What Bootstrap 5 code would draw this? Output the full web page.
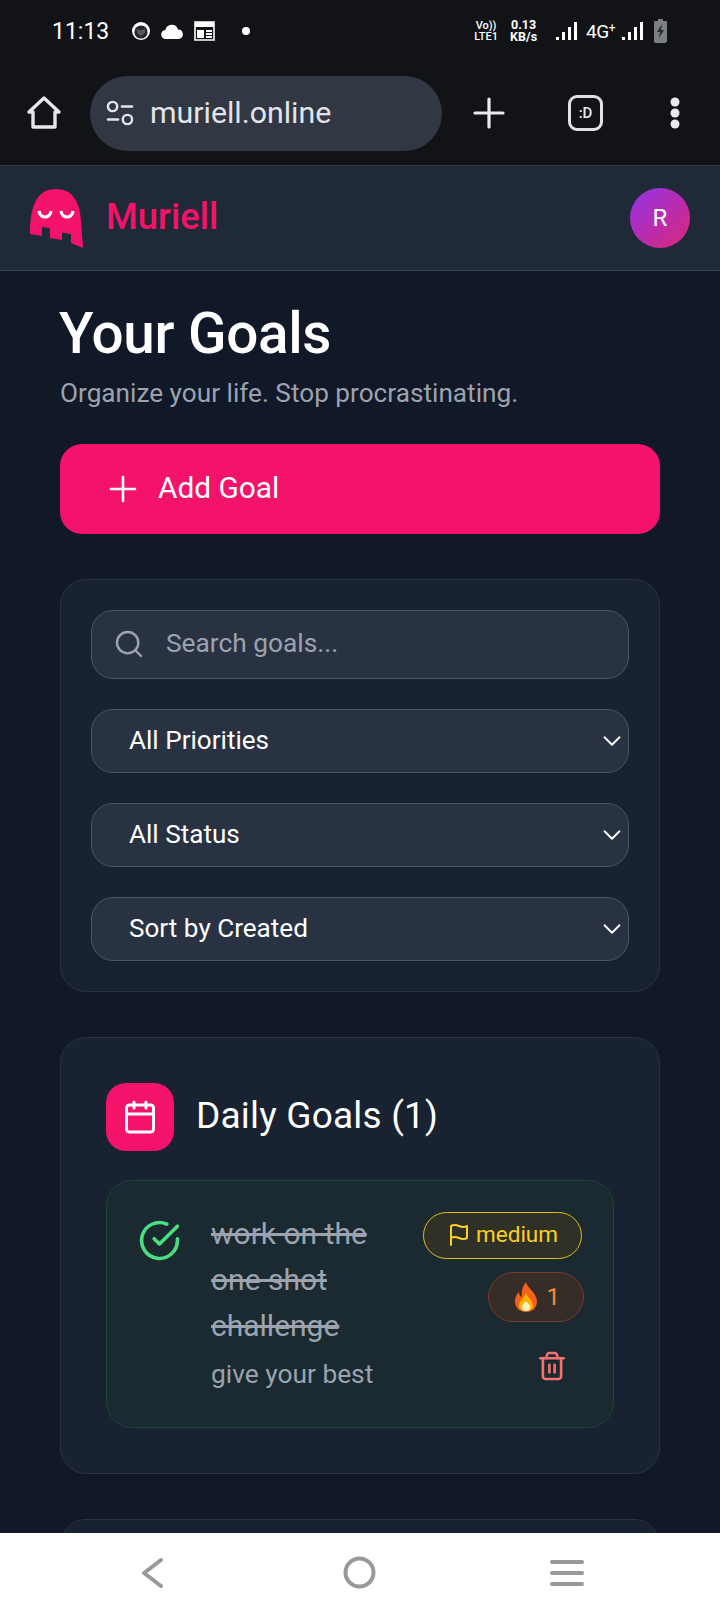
<!DOCTYPE html>
<html lang="en">
<head>
<meta charset="utf-8">
<title>Muriell</title>
<link href="https://cdn.jsdelivr.net/npm/bootstrap@5.3.0/dist/css/bootstrap.min.css" rel="stylesheet">
<style>
html,body{height:1612px;overflow:hidden}
body{font-family:Roboto,"Liberation Sans",sans-serif;background:#111827;color:#fff;display:flex;flex-direction:column}
.chrome-top{background:#111317;height:166px;flex:none;border-bottom:1px solid #33373d}
.status-row{height:56px;padding:6px 53px 0 52px;font-size:22px;line-height:1}
.status-clock{width:63px;font-size:23px}
.gap-face{margin-left:16px}
.gap-cloud,.gap-cal{margin-left:10px}
.status-dot{width:8px;height:8px;border-radius:50%;background:#fff;margin-left:27px}
.status-mini{font-size:11px;line-height:11px;font-weight:500;text-align:center;width:24px}
.status-speed{font-size:12.500px;line-height:12.500px;font-weight:700;text-align:center;width:29px;margin-left:11px}
.gap-bars{margin-left:18px}
.status-4g{font-size:19px;letter-spacing:-.5px;margin:0 7px 0 8px}
.status-4g sup{font-size:12px;top:-.5em}
.tool-row{height:109px;padding:5px 40px 0 26px}
.url-pill{width:352px;height:75px;background:#323744;border-radius:38px;padding-left:16px;gap:16px;font-size:30.300px;color:#e3e5e9;margin-left:28px}
.tool-tail{flex:1;padding-left:31px}
.tab-count{width:35px;height:36px;border:3px solid #dfe1e5;border-radius:9px;font-size:15px;font-weight:500;color:#e8eaed;margin-right:4px}
.app-nav{background:#1f2937;height:105px;flex:none;border-bottom:1px solid #374151;padding:0 30px 0 30px}
.brand-word{color:#f3136b;font-size:36.400px;font-weight:500;margin-left:22px;line-height:1;margin-top:-2px}
.user-disc{width:60px;height:60px;border-radius:50%;background:linear-gradient(135deg,#9333ea,#db2777);font-size:24px}
.page-body{flex:1;min-height:0;overflow:hidden;padding:0 60px;background:#111827}
.page-h{font-size:56.600px;font-weight:500;line-height:1;margin:35px 0 0 -1px;letter-spacing:-.3px}
.page-sub{font-size:26.200px;color:#9ca3af;margin:14px 0 0;line-height:32px}
.add-btn{background:#f3136b;border:0;border-radius:22px;height:90px;width:100%;margin-top:35px;color:#fff;font-size:29.800px;padding:0 0 0 49px;gap:21px;text-align:left}
.add-btn:hover{background:#f3136b;color:#fff}
.panel{background:#182230;border:1px solid #2a3441;border-radius:26px}
.filter-panel{margin-top:45px;padding:30px 30px;gap:30px;height:413px}
.search-wrap{height:69px;background:#283242;border:1px solid #4b5563;border-radius:22px;padding-left:21px;gap:21px}
.search-field{background:transparent;border:0;color:#fff;font-size:26.300px;padding:0;box-shadow:none;margin-top:-1px}
.search-field:focus{background:transparent;color:#fff;box-shadow:none}
.search-field::placeholder{color:#9ca3af;opacity:1}
.pick{height:64px;background-color:#283242;border:1px solid #4b5563;border-radius:22px;color:#fff;font-size:26.100px;padding:0 30px 0 37px;background-size:20px 20px;background-position:right 6px center;
background-image:url("data:image/svg+xml,%3csvg xmlns='http://www.w3.org/2000/svg' viewBox='0 0 16 16'%3e%3cpath fill='none' stroke='%23fff' stroke-linecap='round' stroke-linejoin='round' stroke-width='1.500' d='m2 5 6 6 6-6'/%3e%3c/svg%3e")}
.goals-panel{margin-top:45px;padding:45px 45px 0;height:437px}
.ico-tile{width:68px;height:68px;background:#f3136b;border-radius:20px}
.goals-h{font-size:37px;font-weight:400;margin:0 0 0 22px;letter-spacing:.2px}
.goal-box{margin-top:29px;height:248px;background:#1a2a30;border:1px solid #1f4535;border-radius:26px;padding:31px 31px 0 31px}
.goal-text{width:175px;margin-left:30px;flex:none}
.goal-title{font-size:30px;line-height:46.300px;color:#9ca3af;text-decoration:line-through;margin:-1px 0 0;font-weight:400}
.goal-note{font-size:26.300px;color:#9ca3af;line-height:32px;margin:9px 0 0;white-space:nowrap}
.goal-side{flex:1;align-items:flex-end}
.chip-med{height:47px;padding:0 23px 0 23px;gap:5px;border:1px solid #e1bc1f;border-radius:24px;background:#2f3127;color:#fcd022;font-size:22.500px}
.chip-fire{height:50px;padding:0 23px 0 25px;gap:9px;border:1px solid #7a3b29;border-radius:25px;background:#372d28;color:#f58a3c;font-size:24px;margin-top:13px;margin-right:-2px}
.bin-btn{margin-top:29px;margin-right:17px;line-height:0}
.peek{margin-top:45px;height:60px;border-radius:26px 26px 0 0}
.sys-nav{height:79px;flex:none;background:#fff;padding:0 136px 0 141px}
.home-ring{margin-left:5px}
</style>
</head>
<body>
<header class="chrome-top">
  <div class="status-row d-flex align-items-center">
    <span class="status-clock">11:13</span>
    <svg class="gap-face" width="20" height="20" viewBox="0 0 20 20"><circle cx="10" cy="10" r="9" fill="#fff"/><circle cx="10" cy="11" r="6.600" fill="#24262a"/><path d="M6 7l2 2h4l2-2v5l-4 3-4-3z" fill="#55585c"/></svg>
    <svg class="gap-cloud" width="23" height="15" viewBox="0 0 23 15"><path d="M5 15a4.500 4.500 0 0 1-.6-9A6.500 6.500 0 0 1 17 5.500a4.800 4.800 0 0 1 1 9.500z" fill="#fff"/></svg>
    <svg class="gap-cal" width="21" height="20" viewBox="0 0 21 20"><path d="M1 1h19v18H1z" fill="none" stroke="#fff" stroke-width="1.600"/><path d="M1 1h19v5H1z" fill="#fff"/><path d="M3 9h7v8H3zM12 9h6v2h-6zM12 12h6v2h-6zM12 15h6v2h-6z" fill="#fff"/></svg>
    <span class="status-dot"></span>
    <div class="ms-auto d-flex align-items-center">
      <div class="status-mini">Vo))<br>LTE1</div>
      <div class="status-speed">0.13<br>KB/s</div>
      <svg class="gap-bars" width="22" height="20" viewBox="0 0 22 20" fill="#fff"><path d="M0 16h3v3H0zM6 11h3v8H6zM12 6h3v13h-3zM18 1h3v18h-3z"/></svg>
      <span class="status-4g">4G<sup>+</sup></span>
      <svg width="22" height="20" viewBox="0 0 22 20" fill="#fff"><path d="M0 16h3v3H0zM6 11h3v8H6zM12 6h3v13h-3zM18 1h3v18h-3z"/></svg>
      <svg class="gap-cloud" width="13" height="24" viewBox="0 0 13 24"><path d="M4 0h5v2h3a1 1 0 0 1 1 1v19a2 2 0 0 1-2 2H2a2 2 0 0 1-2-2V3a1 1 0 0 1 1-1h3z" fill="#7c7f83"/><path d="M8 5 3 13h3l-1 6 5-8H7z" fill="#2b2d30"/></svg>
    </div>
  </div>
  <div class="tool-row d-flex align-items-center">
    <svg width="36" height="36" viewBox="0 0 36 36" fill="none" stroke="#e5e7eb" stroke-width="3.400" stroke-linejoin="round"><path d="M18 3 3 17h4v15h22V17h4z"/></svg>
    <div class="url-pill d-flex align-items-center">
      <svg width="28" height="26" viewBox="0 0 30 28" fill="none" stroke="#e3e5e9" stroke-width="2.600" stroke-linecap="round"><circle cx="7" cy="7" r="5"/><path d="M17 7h11M2 21h11"/><circle cx="23" cy="21" r="5"/></svg>
      <span>muriell.online</span>
    </div>
    <div class="tool-tail d-flex align-items-center justify-content-between">
      <svg width="32" height="32" viewBox="0 0 32 32" stroke="#e8eaed" stroke-width="3.200" stroke-linecap="round"><path d="M16 2v28M2 16h28"/></svg>
      <div class="tab-count d-flex align-items-center justify-content-center">:D</div>
      <svg width="10" height="32" viewBox="0 0 10 32" fill="#e8eaed"><circle cx="5" cy="5" r="4.500"/><circle cx="5" cy="16" r="4.500"/><circle cx="5" cy="27" r="4.500"/></svg>
    </div>
  </div>
</header>

<nav class="app-nav d-flex align-items-center justify-content-between">
  <div class="d-flex align-items-center">
    <svg width="54" height="59" viewBox="0 0 54 59"><path d="M0 45C0 15 8 0 26 0C44 0 50 15 51 32L53 59L41 54L41 45L32 43.500L32 51L20 49L20 39L12 38L12 47Z" fill="#f3136b"/><path d="M9 22c1 8 11 8 12 0M31 22c1 8 11 8 12 0" fill="none" stroke="#fff" stroke-width="3.200"/></svg>
    <span class="brand-word">Muriell</span>
  </div>
  <div class="user-disc d-flex align-items-center justify-content-center">R</div>
</nav>

<main class="page-body">
  <h1 class="page-h">Your Goals</h1>
  <p class="page-sub">Organize your life. Stop procrastinating.</p>
  <button class="btn add-btn d-flex align-items-center" type="button">
    <svg width="28" height="28" viewBox="0 0 28 28" stroke="#fff" stroke-width="2.600" stroke-linecap="round"><path d="M14 2v24M2 14h24"/></svg>
    Add Goal
  </button>

  <section class="panel filter-panel d-flex flex-column">
    <div class="search-wrap d-flex align-items-center">
      <svg width="32" height="32" viewBox="0 0 24 24" fill="none" stroke="#9ca3af" stroke-width="1.800" stroke-linecap="round" style="flex:none"><circle cx="11" cy="11" r="8"/><path d="m21 21-4.300-4.300"/></svg>
      <input class="form-control search-field" type="text" placeholder="Search goals...">
    </div>
    <select class="form-select pick"><option>All Priorities</option></select>
    <select class="form-select pick"><option>All Status</option></select>
    <select class="form-select pick"><option>Sort by Created</option></select>
  </section>

  <section class="panel goals-panel">
    <div class="d-flex align-items-center">
      <div class="ico-tile d-flex align-items-center justify-content-center">
        <svg width="36" height="36" viewBox="0 0 24 24" fill="none" stroke="#fff" stroke-width="2" stroke-linecap="round" stroke-linejoin="round"><rect x="3" y="4" width="18" height="18" rx="2"/><path d="M16 2v4M8 2v4M3 10h18"/></svg>
      </div>
      <h2 class="goals-h">Daily Goals (1)</h2>
    </div>
    <div class="goal-box d-flex">
      <svg width="43" height="43" viewBox="0 0 24 24" fill="none" stroke="#4ade80" stroke-width="2" stroke-linecap="round" stroke-linejoin="round" style="flex:none;margin-top:7px"><path d="M22 11.080V12a10 10 0 1 1-5.930-9.140"/><path d="M22 4 12 14.010l-3-3"/></svg>
      <div class="goal-text">
        <h3 class="goal-title">work on the one shot challenge</h3>
        <p class="goal-note">give your best</p>
      </div>
      <div class="goal-side d-flex flex-column">
        <span class="chip-med d-inline-flex align-items-center">
          <svg width="24" height="24" viewBox="0 0 24 24" fill="none" stroke="#fcd022" stroke-width="2" stroke-linecap="round" stroke-linejoin="round"><path d="M4 15s1-1 4-1 5 2 8 2 4-1 4-1V3s-1 1-4 1-5-2-8-2-4 1-4 1z"/><path d="M4 22v-7"/></svg>
          medium
        </span>
        <span class="chip-fire d-inline-flex align-items-center">
          <svg width="24" height="30" viewBox="0 0 24 30"><path d="M12 0c1 6 10 10 11 19 0 7-5 11-11 11S1 26 1 19c0-4 2-7 4-9 0 3 1 4 3 5C7 9 9 4 12 0z" fill="#f4611e"/><path d="M12 11c1 4 7 7 7 13 0 3-3 5-7 5s-7-2-7-5c0-5 5-8 7-13z" fill="#ffb300"/><path d="M12 19c1 2 4 3 4 6s-2 4-4 4-4-1-4-4 3-4 4-6z" fill="#fff3c4"/></svg>
          1
        </span>
        <span class="bin-btn">
          <svg width="26" height="30" viewBox="2 1 20 22" fill="none" stroke="#f87171" stroke-width="2" stroke-linecap="round" stroke-linejoin="round"><path d="M3 6h18"/><path d="M19 6v14c0 1-1 2-2 2H7c-1 0-2-1-2-2V6"/><path d="M8 6V4c0-1 1-2 2-2h4c1 0 2 1 2 2v2"/><path d="M10 11v6M14 11v6"/></svg>
        </span>
      </div>
    </div>
  </section>
  <section class="panel peek"></section>
</main>

<footer class="sys-nav d-flex align-items-center justify-content-between">
  <svg width="23" height="32" viewBox="0 0 23 32" fill="none" stroke="#999" stroke-width="4" stroke-linecap="round" stroke-linejoin="round"><path d="M20 3 3 16l17 13"/></svg>
  <svg class="home-ring" width="33" height="33" viewBox="0 0 33 33" fill="none" stroke="#999" stroke-width="4"><circle cx="16.500" cy="16.500" r="14"/></svg>
  <svg width="34" height="28" viewBox="0 0 34 28" stroke="#999" stroke-width="4" stroke-linecap="round"><path d="M2 3h30M2 14h30M2 25h30"/></svg>
</footer>
</body>
</html>
